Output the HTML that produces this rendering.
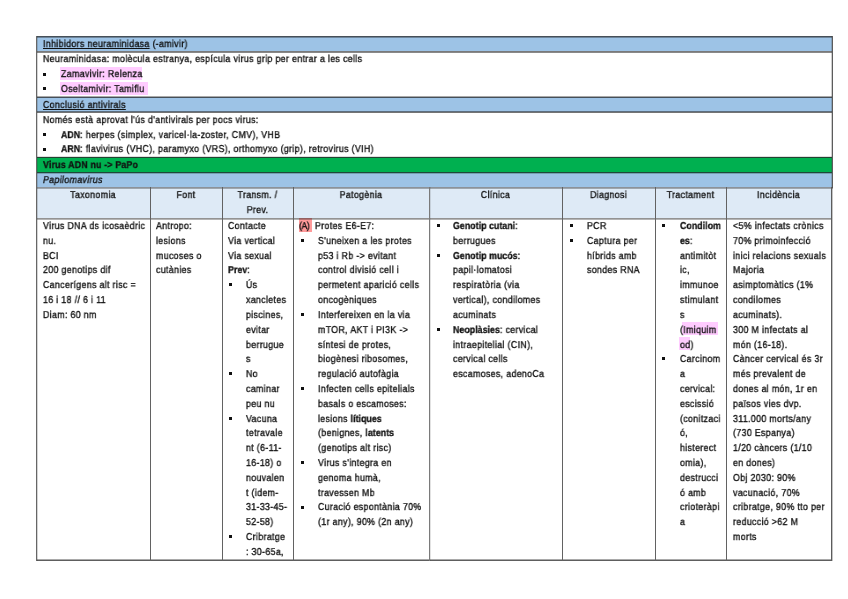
<!DOCTYPE html>
<html><head><meta charset="utf-8"><title>Papilomavirus</title>
<style>
html,body{margin:0;padding:0;background:#fff;}
body{width:848px;height:599px;position:relative;overflow:hidden;font-family:"Liberation Sans",sans-serif;font-size:10px;color:#111;text-rendering:geometricPrecision;}
#w{position:absolute;left:0;top:0;width:848px;height:599px;}
.r{position:absolute;}
.t{position:absolute;white-space:pre;line-height:15px;letter-spacing:0.394px;transform:scaleX(0.88);transform-origin:0 0;will-change:transform;-webkit-text-stroke:0.35px #111;}
.col{position:absolute;white-space:pre;line-height:14.82px;letter-spacing:0.394px;transform:scaleX(0.88);transform-origin:0 0;will-change:transform;-webkit-text-stroke:0.35px #111;}
.b{position:absolute;width:3px;height:3px;background:#111;}
u{text-decoration:underline;text-underline-offset:1px;}
b{-webkit-text-stroke:0.3px #111;letter-spacing:0.05px;}
</style></head><body>
<div id="w"><div class="r" style="left:36px;top:36px;width:797px;height:15px;background:#9DC3E6"></div>
<div class="r" style="left:36px;top:97px;width:797px;height:15px;background:#9DC3E6"></div>
<div class="r" style="left:36px;top:157px;width:797px;height:15px;background:#00B050"></div>
<div class="r" style="left:36px;top:172px;width:797px;height:15px;background:#9DC3E6"></div>
<div class="r" style="left:36px;top:187px;width:796px;height:31px;background:#DEEAF6"></div>
<div class="r" style="left:60px;top:67px;width:82px;height:13px;background:#FFCCFF"></div>
<div class="r" style="left:60px;top:82px;width:88px;height:13px;background:#FFCCFF"></div>
<div class="r" style="left:299px;top:218px;width:13px;height:14px;background:#FF9A9A"></div>
<div class="r" style="left:682px;top:322px;width:36px;height:13px;background:#FFCCFF"></div>
<div class="r" style="left:679px;top:337px;width:11px;height:13px;background:#FFCCFF"></div>
<div class="r" style="left:36px;top:36px;width:797px;height:1px;background:rgba(40,40,40,0.75)"></div>
<div class="r" style="left:36px;top:37px;width:797px;height:1px;background:rgba(40,40,40,0.4)"></div>
<div class="r" style="left:36px;top:51px;width:797px;height:1px;background:rgba(40,40,40,0.62)"></div>
<div class="r" style="left:36px;top:52px;width:797px;height:1px;background:rgba(40,40,40,0.55)"></div>
<div class="r" style="left:36px;top:96px;width:797px;height:1px;background:rgba(40,40,40,0.4)"></div>
<div class="r" style="left:36px;top:97px;width:797px;height:1px;background:rgba(40,40,40,0.75)"></div>
<div class="r" style="left:36px;top:111px;width:797px;height:1px;background:rgba(40,40,40,0.55)"></div>
<div class="r" style="left:36px;top:112px;width:797px;height:1px;background:rgba(40,40,40,0.65)"></div>
<div class="r" style="left:36px;top:157px;width:797px;height:1px;background:rgba(40,40,40,0.8)"></div>
<div class="r" style="left:36px;top:156px;width:797px;height:1px;background:rgba(40,40,40,0.15)"></div>
<div class="r" style="left:36px;top:187px;width:797px;height:1px;background:rgba(40,40,40,0.45)"></div>
<div class="r" style="left:36px;top:188px;width:797px;height:1px;background:rgba(40,40,40,0.35)"></div>
<div class="r" style="left:36px;top:172px;width:797px;height:1px;background:rgba(0,40,15,0.80)"></div>
<div class="r" style="left:36px;top:173px;width:797px;height:1px;background:rgba(0,50,20,0.25)"></div>
<div class="r" style="left:36px;top:218px;width:796px;height:1px;background:rgba(40,40,40,0.5)"></div>
<div class="r" style="left:36px;top:219px;width:796px;height:1px;background:rgba(40,40,40,0.35)"></div>
<div class="r" style="left:36px;top:559px;width:796px;height:1px;background:rgba(40,40,40,0.4)"></div>
<div class="r" style="left:36px;top:560px;width:796px;height:1px;background:rgba(40,40,40,0.75)"></div>
<div class="r" style="left:36px;top:36px;width:1px;height:525px;background:#666666"></div>
<div class="r" style="left:37px;top:36px;width:1px;height:525px;background:rgba(60,60,60,0.22)"></div>
<div class="r" style="left:832px;top:36px;width:1px;height:152px;background:#5c5c5c"></div>
<div class="r" style="left:831px;top:36px;width:1px;height:152px;background:rgba(60,60,60,0.25)"></div>
<div class="r" style="left:150px;top:187px;width:1px;height:374px;background:#626262"></div>
<div class="r" style="left:222px;top:187px;width:1px;height:374px;background:#626262"></div>
<div class="r" style="left:293px;top:187px;width:1px;height:374px;background:#626262"></div>
<div class="r" style="left:562px;top:187px;width:1px;height:374px;background:#626262"></div>
<div class="r" style="left:655px;top:187px;width:1px;height:374px;background:#626262"></div>
<div class="r" style="left:726px;top:187px;width:1px;height:374px;background:#626262"></div>
<div class="r" style="left:429px;top:187px;width:1px;height:374px;background:#7a7a7a"></div>
<div class="r" style="left:430px;top:187px;width:1px;height:374px;background:rgba(60,60,60,0.15)"></div>
<div class="r" style="left:831px;top:187px;width:1px;height:374px;background:#5c5c5c"></div>
<div class="r" style="left:832px;top:187px;width:1px;height:374px;background:rgba(60,60,60,0.3)"></div>
<div class="t" style="left:43px;top:37px;"><u>Inhibidors neuraminidasa</u> (-amivir)</div>
<div class="t" style="left:43px;top:52px;">Neuraminidasa: molècula estranya, espícula virus grip per entrar a les cells</div>
<div class="b" style="left:43px;top:73px"></div>
<div class="t" style="left:61px;top:67px;">Zamavivir: Relenza</div>
<div class="b" style="left:43px;top:87px"></div>
<div class="t" style="left:61px;top:82px;">Oseltamivir: Tamiflu</div>
<div class="t" style="left:43px;top:98px;"><u>Conclusió antivirals</u></div>
<div class="t" style="left:43px;top:113px;">Només està aprovat l'ús d'antivirals per pocs virus:</div>
<div class="b" style="left:43px;top:133px"></div>
<div class="t" style="left:61px;top:128px;"><b>ADN</b>: herpes (simplex, varicel·la-zoster, CMV), VHB</div>
<div class="b" style="left:43px;top:148px"></div>
<div class="t" style="left:61px;top:142px;"><b>ARN</b>: flavivirus (VHC), paramyxo (VRS), orthomyxo (grip), retrovirus (VIH)</div>
<div class="t" style="left:43px;top:158px;"><b style="letter-spacing:0.22px">Virus ADN nu -&gt; PaPo</b></div>
<div class="t" style="left:43px;top:173px;"><i>Papilomavirus</i></div>
<div class="t" style="left:36px;top:188px;width:114px;text-align:center;transform-origin:50% 0">Taxonomia</div>
<div class="t" style="left:150px;top:188px;width:72px;text-align:center;transform-origin:50% 0">Font</div>
<div class="t" style="left:222px;top:188px;width:71px;text-align:center;transform-origin:50% 0">Transm. /<br>Prev.</div>
<div class="t" style="left:293px;top:188px;width:136px;text-align:center;transform-origin:50% 0">Patogènia</div>
<div class="t" style="left:429px;top:188px;width:133px;text-align:center;transform-origin:50% 0">Clínica</div>
<div class="t" style="left:562px;top:188px;width:93px;text-align:center;transform-origin:50% 0">Diagnosi</div>
<div class="t" style="left:655px;top:188px;width:71px;text-align:center;transform-origin:50% 0">Tractament</div>
<div class="t" style="left:726px;top:188px;width:105px;text-align:center;transform-origin:50% 0">Incidència</div>
<div class="col" style="left:43px;top:220px">Virus DNA ds icosaèdric
nu.
BCI
200 genotips dif
Cancerígens alt risc =
16 i 18 // 6 i 11
Diam: 60 nm</div>
<div class="col" style="left:156px;top:220px">Antropo:
lesions
mucoses o
cutànies</div>
<div class="col" style="left:228px;top:220px">Contacte
Via vertical
Via sexual
<b>Prev</b>:</div>
<div class="col" style="left:246px;top:220px">



Ús
xancletes
piscines,
evitar
berrugue
s
No
caminar
peu nu
Vacuna
tetravale
nt (6-11-
16-18) o
nouvalen
t (idem-
31-33-45-
52-58)
Cribratge
: 30-65a,</div>
<div class="col" style="left:299px;top:220px"><span style="letter-spacing:-0.6px">(A)</span></div>
<div class="col" style="left:315px;top:220px">Protes E6-E7:</div>
<div class="col" style="left:318px;top:220px">
S'uneixen a les protes
p53 i Rb -&gt; evitant
control divisió cell i
permetent aparició cells
oncogèniques
Interfereixen en la via
mTOR, AKT i PI3K -&gt;
síntesi de protes,
biogènesi ribosomes,
regulació autofàgia
Infecten cells epitelials
basals o escamoses:
lesions <b>lítiques</b>
(benignes, <b>latents</b>
(genotips alt risc)
Virus s'integra en
genoma humà,
travessen Mb
Curació espontània 70%
(1r any), 90% (2n any)</div>
<div class="col" style="left:453px;top:220px"><b>Genotip cutani</b>:
berrugues
<b>Genotip mucós</b>:
papil·lomatosi
respiratòria (via
vertical), condilomes
acuminats
<b>Neoplàsies</b>: cervical
intraepitelial (CIN),
cervical cells
escamoses, adenoCa</div>
<div class="col" style="left:587px;top:220px">PCR
Captura per
híbrids amb
sondes RNA</div>
<div class="col" style="left:680px;top:220px"><b>Condilom</b>
<b>es</b>:
antimitòt
ic,
immunoe
stimulant
s
(Imiquim
od)
Carcinom
a
cervical:
escissió
(conitzaci
ó,
histerect
omia),
destrucci
ó amb
crioteràpi
a</div>
<div class="col" style="left:733px;top:220px">&lt;5% infectats crònics
70% primoinfecció
inici relacions sexuals
Majoria
asimptomàtics (1%
condilomes
acuminats).
300 M infectats al
món (16-18).
Càncer cervical és 3r
més prevalent de
dones al món, 1r en
països vies dvp.
311.000 morts/any
(730 Espanya)
1/20 càncers (1/10
en dones)
Obj 2030: 90%
vacunació, 70%
cribratge, 90% tto per
reducció &gt;62 M
morts</div>
<div class="b" style="left:229px;top:283px"></div>
<div class="b" style="left:229px;top:372px"></div>
<div class="b" style="left:229px;top:417px"></div>
<div class="b" style="left:229px;top:535px"></div>
<div class="b" style="left:301px;top:239px"></div>
<div class="b" style="left:301px;top:313px"></div>
<div class="b" style="left:301px;top:387px"></div>
<div class="b" style="left:301px;top:461px"></div>
<div class="b" style="left:301px;top:506px"></div>
<div class="b" style="left:437px;top:224px"></div>
<div class="b" style="left:437px;top:254px"></div>
<div class="b" style="left:437px;top:328px"></div>
<div class="b" style="left:570px;top:224px"></div>
<div class="b" style="left:570px;top:239px"></div>
<div class="b" style="left:662px;top:224px"></div>
<div class="b" style="left:662px;top:357px"></div></div>
</body></html>
